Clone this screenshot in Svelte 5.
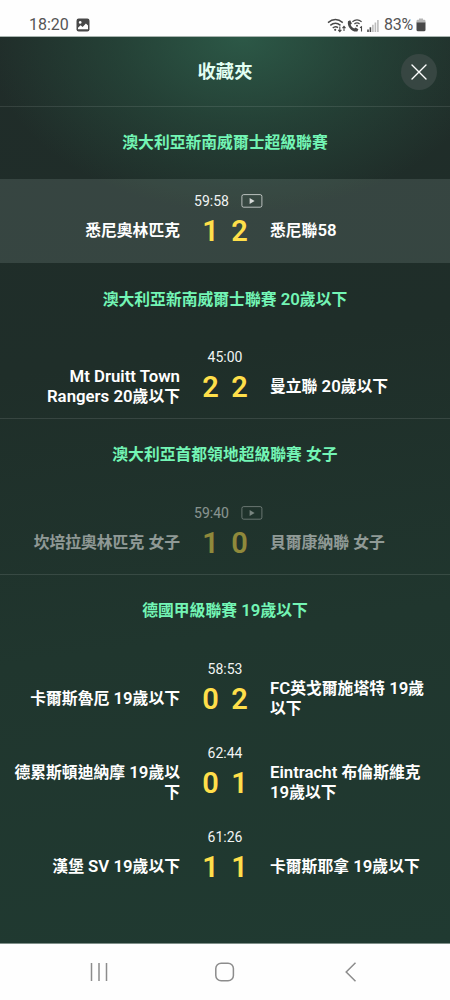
<script lang="ts">
    interface Match {
        time: string;
        home: string;
        away: string;
        score: [number, number];
        video?: boolean;
        active?: boolean;
        suspended?: boolean;
    }

    interface League {
        name: string;
        matches: Match[];
    }

    const leagues: League[] = [
        {
            name: "澳大利亞新南威爾士超級聯賽",
            matches: [
                { time: "59:58", home: "悉尼奧林匹克", away: "悉尼聯58", score: [1, 2], video: true, active: true },
            ],
        },
        {
            name: "澳大利亞新南威爾士聯賽 20歲以下",
            matches: [
                { time: "45:00", home: "Mt Druitt Town Rangers 20歲以下", away: "曼立聯 20歲以下", score: [2, 2] },
            ],
        },
        {
            name: "澳大利亞首都領地超級聯賽 女子",
            matches: [
                { time: "59:40", home: "坎培拉奧林匹克 女子", away: "貝爾康納聯 女子", score: [1, 0], video: true, suspended: true },
            ],
        },
        {
            name: "德國甲級聯賽 19歲以下",
            matches: [
                { time: "58:53", home: "卡爾斯魯厄 19歲以下", away: "FC英戈爾施塔特 19歲以下", score: [0, 2] },
                { time: "62:44", home: "德累斯頓迪納摩 19歲以下", away: "Eintracht 布倫斯維克 19歲以下", score: [0, 1] },
                { time: "61:26", home: "漢堡 SV 19歲以下", away: "卡爾斯耶拿 19歲以下", score: [1, 1] },
            ],
        },
    ];

    // Latin runs are set a bit larger than the Chinese text around them
    function splitScripts(text: string): string[] {
        return text.split(/([\x20-\x7e]+)/);
    }
</script>

{#snippet mixed(text: string)}
    {#each splitScripts(text) as part, i}{#if i % 2}<span class="latin">{part}</span>{:else}{part}{/if}{/each}
{/snippet}

<div class="screen">
    <div class="status-bar">
        <span class="clock">18:20</span>
        <svg class="picture" width="14" height="14" viewBox="0 0 14 14">
            <rect x="0.5" y="0.5" width="13" height="13" rx="2.2" fill="#484848" />
            <circle cx="4.2" cy="4.4" r="1.3" fill="#fff" />
            <path d="M2 11.2V9.8l2.6-2.5 2 1.8 3.3-3.7L12 7.6v3.6z" fill="#fff" />
        </svg>
        <span class="spacer"></span>
        <svg width="53" height="15" viewBox="0 0 53 15" fill="none" stroke="#484848">
            <path d="M1 4.6Q8.4-1.6 15.8 4.6M3.3 7.4Q8.4 3 13.5 7.4M5.7 10Q8.4 7.6 11 9.6" stroke-width="1.4" />
            <circle cx="8.2" cy="11.8" r="1.1" fill="#484848" stroke="none" />
            <path d="M12.8 8.6v4.6M11.2 11.8l1.6 1.8 1.6-1.8M17 13V8.6M15.5 10.2L17 8.4l1.5 1.8" stroke-width="1.1" />
            <path d="M21 3.2l2.2-.9 1.7 3.2-1.3 1.3c.8 1.8 1.8 2.9 3.6 3.8l1.4-1.2 2.8 1.9-1.1 2.2c-5.2.9-10.6-4.8-9.3-10.3z" fill="#484848" stroke="none" />
            <path d="M25.4 3.8Q30 .1 34.6 3.8M27.4 6Q30 3.8 32.6 6" stroke-width="1.2" />
            <circle cx="30" cy="7.8" r="1" fill="#484848" stroke="none" />
            <path d="M33 9.7l1.5-1v4.8" stroke-width="1.1" />
            <path d="M41 11.4V14M43.4 9.3V14" stroke-width="1.6" />
            <path d="M45.9 6.8V14M48.4 4.4V14M50.9 2V14" stroke="#bcbcbc" stroke-width="1.6" />
        </svg>
        <span class="battery-label">83%</span>
        <svg width="10" height="14" viewBox="0 0 10 14">
            <path d="M3 0.5h4v1.3h1.2q1.3 0 1.3 1.4V5h-9V3.2q0-1.4 1.3-1.4H3z" fill="#b5b5b5" />
            <path d="M0.5 4.5h9v7.3q0 1.5-1.5 1.5H2q-1.5 0-1.5-1.5z" fill="#484848" />
        </svg>
    </div>

    <main class="app">
        <header class="header">
            <span class="side"></span>
            <h1>收藏夾</h1>
            <div class="side">
                <button class="close" aria-label="關閉">
                    <svg width="18" height="18" viewBox="0 0 18 18" stroke="#fff" stroke-width="1.4" stroke-linecap="round">
                        <path d="M2 2l14 14M16 2L2 16" />
                    </svg>
                </button>
            </div>
        </header>

        {#each leagues as league}
            <section class="league">
                <h2>{@render mixed(league.name)}</h2>
                {#each league.matches as match}
                    <div class="match" class:active={match.active} class:suspended={match.suspended}>
                        <div class="info">
                            <span>{match.time}</span>
                            {#if match.video}
                                <svg width="22" height="14" viewBox="0 0 22 14">
                                    <rect x="0.9" y="0.6" width="20" height="12.6" rx="1.8" fill="none" stroke="#fff" stroke-opacity="0.65" />
                                    <path d="M8.6 3.9L13.6 6.9L8.6 9.9z" fill="#fff" fill-opacity="0.8" />
                                </svg>
                            {/if}
                        </div>
                        <div class="teams">
                            <div class="team home">{@render mixed(match.home)}</div>
                            <div class="score">
                                <span>{match.score[0]}</span>
                                <span>{match.score[1]}</span>
                            </div>
                            <div class="team">{@render mixed(match.away)}</div>
                        </div>
                    </div>
                {/each}
            </section>
        {/each}
    </main>

    <nav class="nav-bar">
        <svg width="20" height="20" viewBox="0 0 20 20" stroke="#8c8c8c" stroke-width="1.5">
            <path d="M2.5 1v18M10 1v18M17.5 1v18" />
        </svg>
        <svg width="20" height="20" viewBox="0 0 20 20" fill="none" stroke="#8c8c8c" stroke-width="1.5">
            <rect x="0.8" y="1.2" width="17.6" height="17.6" rx="5.4" />
        </svg>
        <svg width="20" height="20" viewBox="0 0 20 20" fill="none" stroke="#8c8c8c" stroke-width="1.5">
            <path d="M14.5 0.8L5.2 10l9.3 9.2" />
        </svg>
    </nav>
</div>

<style>
    :global(body) {
        margin: 0;
        background: #fff;
    }

    .screen {
        display: flex;
        flex-direction: column;
        width: 450px;
        height: 1000px;
        overflow: hidden;
        font-family: Roboto, "Noto Sans CJK TC", sans-serif;
    }

    .status-bar {
        display: flex;
        align-items: center;
        height: 37px;
        padding: 14px 24px 0 29px;
        box-sizing: border-box;
        background: #fefefe;
        border-bottom: 1px solid #a9b5b0;
        color: #555;
        font-size: 16px;
        line-height: 22px;
    }

    .picture {
        margin-left: 7px;
    }

    .spacer {
        flex: 1;
    }

    .battery-label {
        margin: 0 3px 0 4px;
        letter-spacing: -0.2px;
    }

    .app {
        flex: 1;
        min-height: 0;
        background:
            radial-gradient(ellipse 255px 175px at 242px 0, rgba(48, 102, 80, 0.76), rgba(42, 88, 69, 0.46) 50%, rgba(38, 70, 56, 0)),
            linear-gradient(172deg, #202c29 0%, #1f2e29 35%, #20362e 65%, #203a31 100%);
        color: #fff;
    }

    .header {
        display: flex;
        align-items: center;
        height: 70px;
        padding: 0 13px;
        box-sizing: border-box;
        border-bottom: 1px solid rgba(255, 255, 255, 0.1);
    }

    .side {
        flex: 1;
        display: flex;
        justify-content: flex-end;
    }

    h1 {
        margin: 0 0 3px;
        font-size: 18.3px;
        font-weight: 700;
        color: #e2fff3;
    }

    .close {
        display: flex;
        align-items: center;
        justify-content: center;
        width: 36px;
        height: 36px;
        padding: 0;
        border: none;
        border-radius: 50%;
        background: #374642;
    }

    .league + .league {
        border-top: 1px solid rgba(255, 255, 255, 0.11);
    }

    h2 {
        margin: 0;
        height: 70.9px;
        font-size: 15.8px;
        line-height: 71px;
        font-weight: 700;
        text-align: center;
        color: #73f5b5;
    }

    .league:first-of-type h2 {
        height: 71.6px;
    }

    .latin {
        font-size: 16.8px;
        font-weight: 600;
        /* keeps the larger run from stretching the line box */
        line-height: 1;
    }

    .match {
        height: 84px;
        padding-top: 12.4px;
        box-sizing: border-box;
    }

    .active {
        background: rgba(225, 250, 240, 0.12);
    }

    .league:has(.active) + .league {
        border-top-color: transparent;
    }

    .suspended > div {
        opacity: 0.5;
    }

    .info {
        display: flex;
        align-items: center;
        justify-content: center;
        gap: 12.5px;
        height: 20px;
        font-size: 14px;
        color: #f1f4f3;
    }

    .info:has(svg) {
        padding-left: 7.5px;
    }

    .teams {
        display: flex;
        align-items: center;
        height: 40px;
        padding: 0 14px;
    }

    .team {
        flex: 1;
        font-size: 15.8px;
        line-height: 20px;
        font-weight: 700;
    }

    .home {
        text-align: right;
    }

    .score {
        display: flex;
        justify-content: center;
        width: 90px;
        font-size: 29px;
        font-weight: 600;
        color: #ffdf4a;
    }

    .score span {
        width: 29px;
        text-align: center;
    }

    .nav-bar {
        display: flex;
        align-items: center;
        justify-content: space-between;
        height: 57px;
        padding: 0 89px;
        box-sizing: border-box;
        border-top: 1px solid #7f8f89;
        background: #fefefe;
    }
</style>
